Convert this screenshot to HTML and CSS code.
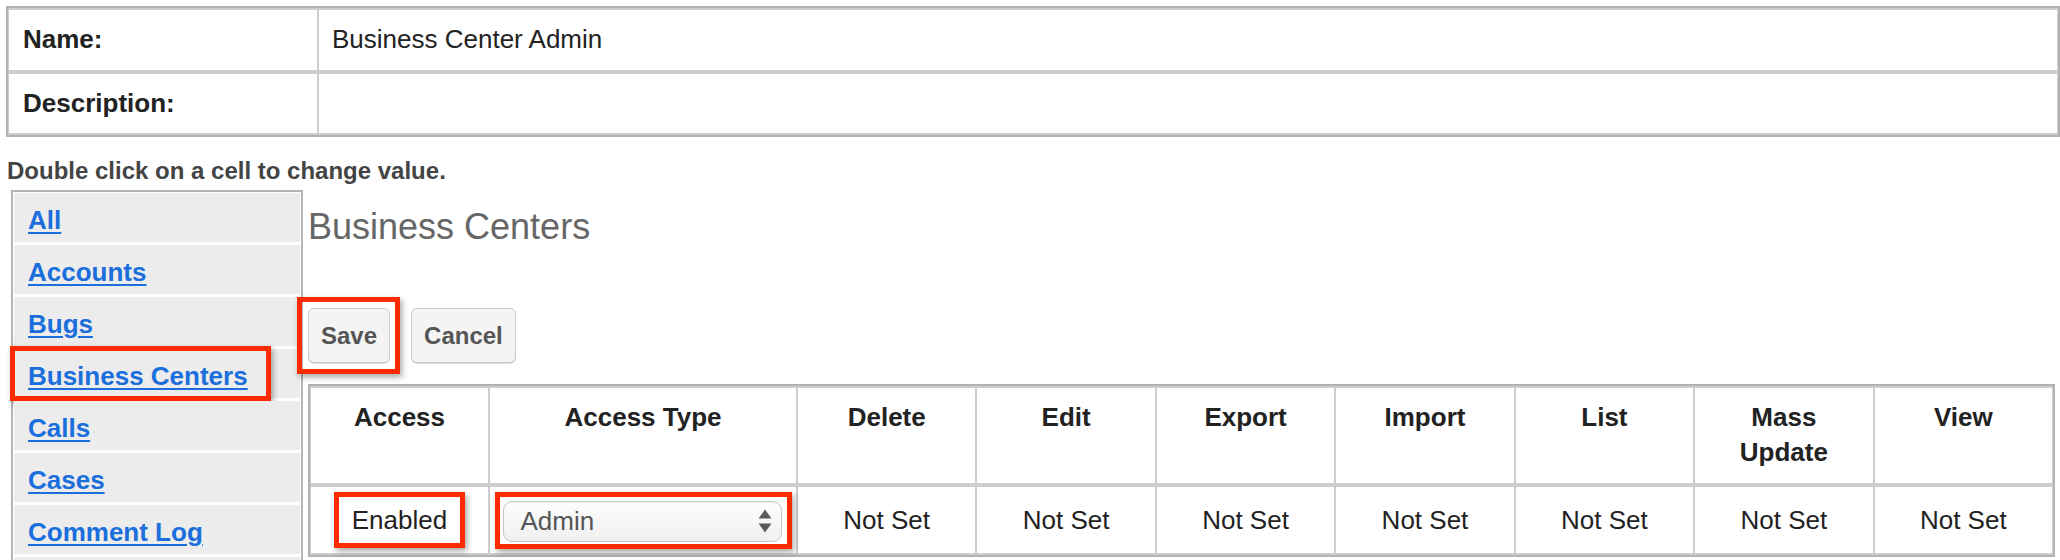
FILE: index.html
```html
<!DOCTYPE html>
<html lang="en">
<head>
<meta charset="utf-8">
<title>Role: Business Center Admin</title>
<link rel="stylesheet" href="styles.css">
</head>
<body>
  <table class="info">
    <tr>
      <td class="label">Name:</td>
      <td>Business Center Admin</td>
    </tr>
    <tr>
      <td class="label">Description:</td>
      <td></td>
    </tr>
  </table>

  <p class="hint">Double click on a cell to change value.</p>

  <div class="layout">
    <ul class="nav">
      <li class="nav-item"><a href="#">All</a></li>
      <li class="nav-item"><a href="#">Accounts</a></li>
      <li class="nav-item"><a href="#">Bugs</a></li>
      <li class="nav-item"><a href="#">Business Centers</a><span class="hl hl-nav"></span></li>
      <li class="nav-item"><a href="#">Calls</a></li>
      <li class="nav-item"><a href="#">Cases</a></li>
      <li class="nav-item"><a href="#">Comment Log</a></li>
      <li class="nav-item" aria-hidden="true"></li>
    </ul>

    <div class="main">
      <h2 class="title">Business Centers</h2>
      <div class="actions">
        <div class="btn-wrap">
          <button class="btn" type="button">Save</button>
          <span class="hl hl-save"></span>
        </div>
        <button class="btn" type="button">Cancel</button>
      </div>

      <table class="perm">
        <tr>
          <th class="c-access">Access</th>
          <th class="c-type">Access Type</th>
          <th>Delete</th>
          <th>Edit</th>
          <th>Export</th>
          <th>Import</th>
          <th>List</th>
          <th>Mass Update</th>
          <th>View</th>
        </tr>
        <tr>
          <td><span class="boxed">Enabled</span></td>
          <td>
            <span class="boxed-select">
              <span class="select">
                <span>Admin</span>
                <svg class="arrows" width="14" height="24" viewBox="0 0 14 24" aria-hidden="true">
                  <polygon points="0.5,9.5 7,0.5 13.5,9.5" fill="#5a5a5a"/>
                  <polygon points="0.5,14.5 13.5,14.5 7,23.5" fill="#5a5a5a"/>
                </svg>
              </span>
            </span>
          </td>
          <td>Not Set</td>
          <td>Not Set</td>
          <td>Not Set</td>
          <td>Not Set</td>
          <td>Not Set</td>
          <td>Not Set</td>
          <td>Not Set</td>
        </tr>
      </table>
    </div>
  </div>
</body>
</html>
```

FILE: styles.css
```css
html, body {
  overflow: hidden;
}

body {
  margin: 0;
  padding: 6px 0 0 6px;
  background: #fff;
  color: #222;
  font-family: "Liberation Sans", Arial, Helvetica, sans-serif;
}

/* ---------- top info table ---------- */
.info {
  width: 100%;
  border: 2px solid #b2b2b2;
  border-spacing: 0;
}

.info td {
  border-style: solid;
  border-color: #cdcdcd;
  border-width: 2px 1px;
  padding: 14px 13px 15.5px;
  font-size: 26px;
  line-height: 30px;
  color: #222;
}

.info .label {
  width: 310px;
  box-sizing: border-box;
  padding-left: 14px;
  font-weight: bold;
}

.hint {
  margin: 20px 0 0 1px;
  font-size: 24px;
  line-height: 28px;
  font-weight: bold;
  color: #444;
}

/* ---------- layout ---------- */
.layout {
  display: flex;
  align-items: flex-start;
  margin-top: 5px;
}

.nav {
  list-style: none;
  margin: 0 0 0 5px;
  padding: 1px;
  width: 292px;
  flex: none;
  box-sizing: border-box;
  border: 2px solid #b5b5b5;
  background: #fff;
}

.nav-item {
  position: relative;
  display: flex;
  align-items: center;
  height: 49px;
  box-sizing: border-box;
  margin-bottom: 3px;
  padding: 5px 0 0 14px;
  background: #ececec;
}

.nav-item a {
  font-size: 26px;
  font-weight: bold;
  color: #1a6fdc;
  text-decoration: underline;
  text-decoration-thickness: 2px;
  text-underline-offset: 3px;
}

/* red annotation frames */
.hl {
  position: absolute;
  border: 5px solid #ff2a00;
  box-shadow: 2px 3px 6px rgba(0, 0, 0, 0.35);
  pointer-events: none;
}

.hl-nav {
  top: -3px;
  bottom: -3px;
  left: -4px;
  right: 29px;
}

.hl-save {
  top: -11px;
  bottom: -11px;
  left: -11px;
  right: -10px;
}

/* ---------- main column ---------- */
.main {
  flex: 1;
  min-width: 0;
  padding-left: 5px;
}

.title {
  margin: 16px 0 0;
  font-size: 36px;
  line-height: 42px;
  font-weight: normal;
  color: #666;
}

.actions {
  display: flex;
  gap: 21px;
  margin-top: 60px;
}

.btn-wrap {
  position: relative;
  display: flex;
}

.btn {
  height: 55px;
  box-sizing: border-box;
  padding: 0 12px;
  border: 1px solid #cacaca;
  border-radius: 6px;
  background: #f4f4f4;
  box-shadow: 0 1px 0 #dcdcdc;
  font-family: "Liberation Sans", Arial, Helvetica, sans-serif;
  font-size: 24px;
  font-weight: bold;
  color: #555;
}

/* ---------- permissions table ---------- */
.perm {
  width: calc(100% - 5px);
  margin-top: 21px;
  border: 2px solid #b2b2b2;
  border-spacing: 0;
  table-layout: fixed;
}

.perm th,
.perm td {
  border-style: solid;
  border-color: #cdcdcd;
  border-width: 2px 1px;
  text-align: center;
  font-size: 26px;
  color: #222;
}

.perm th {
  padding: 12px 14px 13px;
  line-height: 35px;
  font-weight: bold;
  vertical-align: top;
  box-sizing: border-box;
}

.perm .c-access {
  width: 179px;
}

.perm .c-type {
  width: 308px;
}

.perm td {
  padding: 4.5px 4px;
  line-height: 30px;
  vertical-align: middle;
}

.boxed {
  display: inline-block;
  padding: 8px 13px;
  border: 5px solid #ff2a00;
  background: #fff;
  box-shadow: 2px 3px 6px rgba(0, 0, 0, 0.35);
  line-height: 30px;
  vertical-align: middle;
}

.boxed-select {
  display: inline-block;
  padding: 4px 5px 2px 3px;
  border: 5px solid #ff2a00;
  background: #fff;
  box-shadow: 2px 3px 6px rgba(0, 0, 0, 0.35);
  vertical-align: middle;
}

.select {
  display: flex;
  align-items: center;
  justify-content: space-between;
  width: 279px;
  height: 41px;
  box-sizing: border-box;
  padding: 0 9px 0 17px;
  border: 1px solid #c6c6c6;
  border-radius: 9px;
  background: linear-gradient(#fdfdfd, #f0f0f0);
  box-shadow: inset 0 1px 1px rgba(0, 0, 0, 0.06);
  font-size: 26px;
  line-height: 30px;
  color: #555;
  text-align: left;
}

.arrows {
  display: block;
  flex: none;
}
```
